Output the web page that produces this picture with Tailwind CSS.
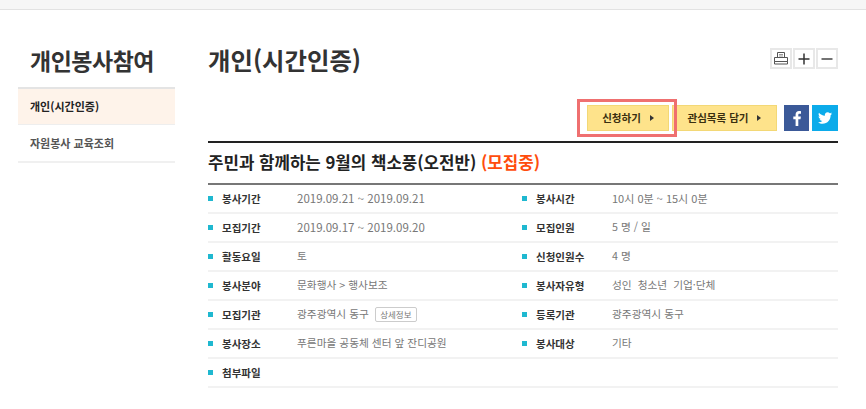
<!DOCTYPE html>
<html lang="ko"><head><meta charset="utf-8">
<script src="https://cdn.jsdelivr.net/npm/@tailwindcss/browser@4"></script>
</head>
<body class="bg-white font-['Noto_Sans_CJK_KR','Noto_Sans',sans-serif] w-[866px] h-[409px] overflow-hidden">
<div class="h-[10px] bg-[#f6f6f6] border-b border-[#e2e2e2]"></div>
<div class="flex pl-[18px] pt-[32px]">
  <aside class="w-[157px] shrink-0">
    <h2 class="h-[45px] pl-3 text-[23px] leading-[36px] font-bold text-[#333] tracking-[-0.5px]">개인봉사참여</h2>
    <div class="h-[38px] bg-[#fef3ea] border-t-2 border-b border-t-[#e4e4e4] border-b-[#eeeeee] pl-3 flex items-center text-[11px] font-bold text-[#222]">개인(시간인증)</div>
    <div class="h-[38px] border-b-2 border-[#f0f0f0] pl-3 flex items-center text-[11px] font-bold text-[#555]">자원봉사 교육조회</div>
  </aside>
  <main class="ml-[33px] w-[630px]">
    <div class="flex justify-between items-start h-[63px]">
      <h1 class="text-[24.400px] leading-[36px] font-bold text-[#333]">개인(시간인증)</h1>
      <div class="flex gap-[1px] mt-[6px]">
        <span class="w-[22px] h-[21px] border-2 border-[#e8e8e8] flex items-center justify-center">
          <svg width="14" height="13" viewBox="0 0 14 13" fill="none" stroke="#555"><path d="M3.500 5V.5h7V5M.5 5.500h13v4h-13zM.5 9.500h13v2.500h-13z"/><path d="M5 2.500h4M5 4h4" stroke="#999"/></svg>
        </span>
        <span class="w-[22px] h-[21px] border-2 border-[#e8e8e8] flex items-center justify-center">
          <svg width="12" height="12" viewBox="0 0 12 12" stroke="#333" stroke-width="1.500"><path d="M6 .5v11M.5 6h11"/></svg>
        </span>
        <span class="w-[22px] h-[21px] border-2 border-[#e8e8e8] flex items-center justify-center">
          <svg width="12" height="12" viewBox="0 0 12 12" stroke="#444" stroke-width="1.500"><path d="M.5 6h11"/></svg>
        </span>
      </div>
    </div>
    <div class="flex justify-end items-center h-[26px]">
      <div class="relative flex gap-[3px] items-center">
        <button class="relative w-[82px] h-[26px] bg-[#fee38b] border border-[#f3d876] text-[10.500px] font-bold text-[#3a2f10] flex items-center justify-center gap-[9px]">
          <span class="absolute -left-[11px] -top-[7px] w-[100px] h-[38px] border-[3px] border-[#ef7070]"></span>
          신청하기 <span class="w-0 h-0 border-y-[3px] border-y-transparent border-l-[4px] border-l-[#333]"></span>
        </button>
        <button class="w-[105px] h-[26px] bg-[#fee38b] border border-[#f3d876] text-[10.500px] font-bold text-[#3a2f10] flex items-center justify-center gap-[9px]">
          관심목록 담기 <span class="w-0 h-0 border-y-[3px] border-y-transparent border-l-[4px] border-l-[#333]"></span>
        </button>
      </div>
      <span class="ml-[7px] w-[25px] h-[26px] bg-[#3b5998] flex items-center justify-center">
        <svg width="8" height="15" viewBox="0 0 8 15" fill="#fff"><path d="M5.300 15V8.300h2.200l.4-2.700H5.300V4c0-.8.300-1.300 1.300-1.300H8V.2C7.700.1 6.900 0 6 0 4 0 2.600 1.200 2.600 3.500v2.100H.3v2.700h2.300V15z"/></svg>
      </span>
      <span class="ml-[3px] w-[26px] h-[26px] bg-[#0cabea] flex items-center justify-center">
        <svg width="14" height="12" viewBox="0 0 24 20" fill="#fff"><path d="M24 2.400c-.9.400-1.800.7-2.800.8 1-.6 1.800-1.600 2.200-2.700-1 .6-2 1-3.100 1.200C19.300.7 18 0 16.600 0c-3.200 0-5.500 3-4.800 6C7.700 5.800 4.100 3.900 1.700.9.400 3.100 1 6 3.200 7.500c-.8 0-1.600-.2-2.200-.6 0 2.300 1.600 4.400 4 4.900-.7.200-1.500.2-2.200.1.600 2 2.500 3.400 4.600 3.400-2 1.600-4.600 2.300-7.200 2C2.400 19.200 5 20 7.600 20c9.100 0 14.300-7.700 14-14.600 1-.7 1.800-1.600 2.400-3z"/></svg>
      </span>
    </div>
    <div class="mt-[10px] border-t-2 border-[#222] h-[42px] flex items-center text-[16.800px] font-bold text-[#222]">
      <span>주민과 함께하는 9월의 책소풍(오전반) <span class="text-[#ff4d0d]">(모집중)</span></span>
    </div>
    <div class="border-t-2 border-[#777] grid grid-cols-[314px_316px] text-[10.700px]">
      <div class="h-[29px] border-b-2 border-[#f2f2f2] flex items-center"><span class="w-[5px] h-[5px] bg-[#1fb8d0]"></span><b class="ml-[9px] w-[75px] text-[10.500px] font-bold text-[#333]">봉사기간</b><span class="text-[#777] text-[11.500px]">2019.09.21 ~ 2019.09.21</span></div>
      <div class="h-[29px] border-b-2 border-[#f2f2f2] flex items-center"><span class="w-[5px] h-[5px] bg-[#1fb8d0]"></span><b class="ml-[9px] w-[76px] text-[10.500px] font-bold text-[#333]">봉사시간</b><span class="text-[#777] text-[11px]">10시 0분 ~ 15시 0분</span></div>
      <div class="h-[29px] border-b-2 border-[#f2f2f2] flex items-center"><span class="w-[5px] h-[5px] bg-[#1fb8d0]"></span><b class="ml-[9px] w-[75px] text-[10.500px] font-bold text-[#333]">모집기간</b><span class="text-[#777] text-[11.500px]">2019.09.17 ~ 2019.09.20</span></div>
      <div class="h-[29px] border-b-2 border-[#f2f2f2] flex items-center"><span class="w-[5px] h-[5px] bg-[#1fb8d0]"></span><b class="ml-[9px] w-[76px] text-[10.500px] font-bold text-[#333]">모집인원</b><span class="text-[#777]">5 명 / 일</span></div>
      <div class="h-[29px] border-b-2 border-[#f2f2f2] flex items-center"><span class="w-[5px] h-[5px] bg-[#1fb8d0]"></span><b class="ml-[9px] w-[75px] text-[10.500px] font-bold text-[#333]">활동요일</b><span class="text-[#777]">토</span></div>
      <div class="h-[29px] border-b-2 border-[#f2f2f2] flex items-center"><span class="w-[5px] h-[5px] bg-[#1fb8d0]"></span><b class="ml-[9px] w-[76px] text-[10.500px] font-bold text-[#333]">신청인원수</b><span class="text-[#777]">4 명</span></div>
      <div class="h-[29px] border-b-2 border-[#f2f2f2] flex items-center"><span class="w-[5px] h-[5px] bg-[#1fb8d0]"></span><b class="ml-[9px] w-[75px] text-[10.500px] font-bold text-[#333]">봉사분야</b><span class="text-[#777]">문화행사 &gt; 행사보조</span></div>
      <div class="h-[29px] border-b-2 border-[#f2f2f2] flex items-center"><span class="w-[5px] h-[5px] bg-[#1fb8d0]"></span><b class="ml-[9px] w-[76px] text-[10.500px] font-bold text-[#333]">봉사자유형</b><span class="text-[#777] whitespace-pre">성인  청소년  기업·단체</span></div>
      <div class="h-[29px] border-b-2 border-[#f2f2f2] flex items-center"><span class="w-[5px] h-[5px] bg-[#1fb8d0]"></span><b class="ml-[9px] w-[75px] text-[10.500px] font-bold text-[#333]">모집기관</b><span class="text-[#777]">광주광역시 동구</span><span class="ml-[6px] w-[42px] h-[15px] border border-[#ccc] rounded-[2px] flex items-center justify-center text-[8.500px] text-[#777]">상세정보</span></div>
      <div class="h-[29px] border-b-2 border-[#f2f2f2] flex items-center"><span class="w-[5px] h-[5px] bg-[#1fb8d0]"></span><b class="ml-[9px] w-[76px] text-[10.500px] font-bold text-[#333]">등록기관</b><span class="text-[#777]">광주광역시 동구</span></div>
      <div class="h-[29px] border-b-2 border-[#f2f2f2] flex items-center"><span class="w-[5px] h-[5px] bg-[#1fb8d0]"></span><b class="ml-[9px] w-[75px] text-[10.500px] font-bold text-[#333]">봉사장소</b><span class="text-[#777]">푸른마을 공동체 센터 앞 잔디공원</span></div>
      <div class="h-[29px] border-b-2 border-[#f2f2f2] flex items-center"><span class="w-[5px] h-[5px] bg-[#1fb8d0]"></span><b class="ml-[9px] w-[76px] text-[10.500px] font-bold text-[#333]">봉사대상</b><span class="text-[#777]">기타</span></div>
      <div class="col-span-2 h-[29px] border-b-2 border-[#f2f2f2] flex items-center"><span class="w-[5px] h-[5px] bg-[#1fb8d0]"></span><b class="ml-[9px] w-[75px] text-[10.500px] font-bold text-[#333]">첨부파일</b></div>
    </div>
  </main>
</div>
</body></html>
